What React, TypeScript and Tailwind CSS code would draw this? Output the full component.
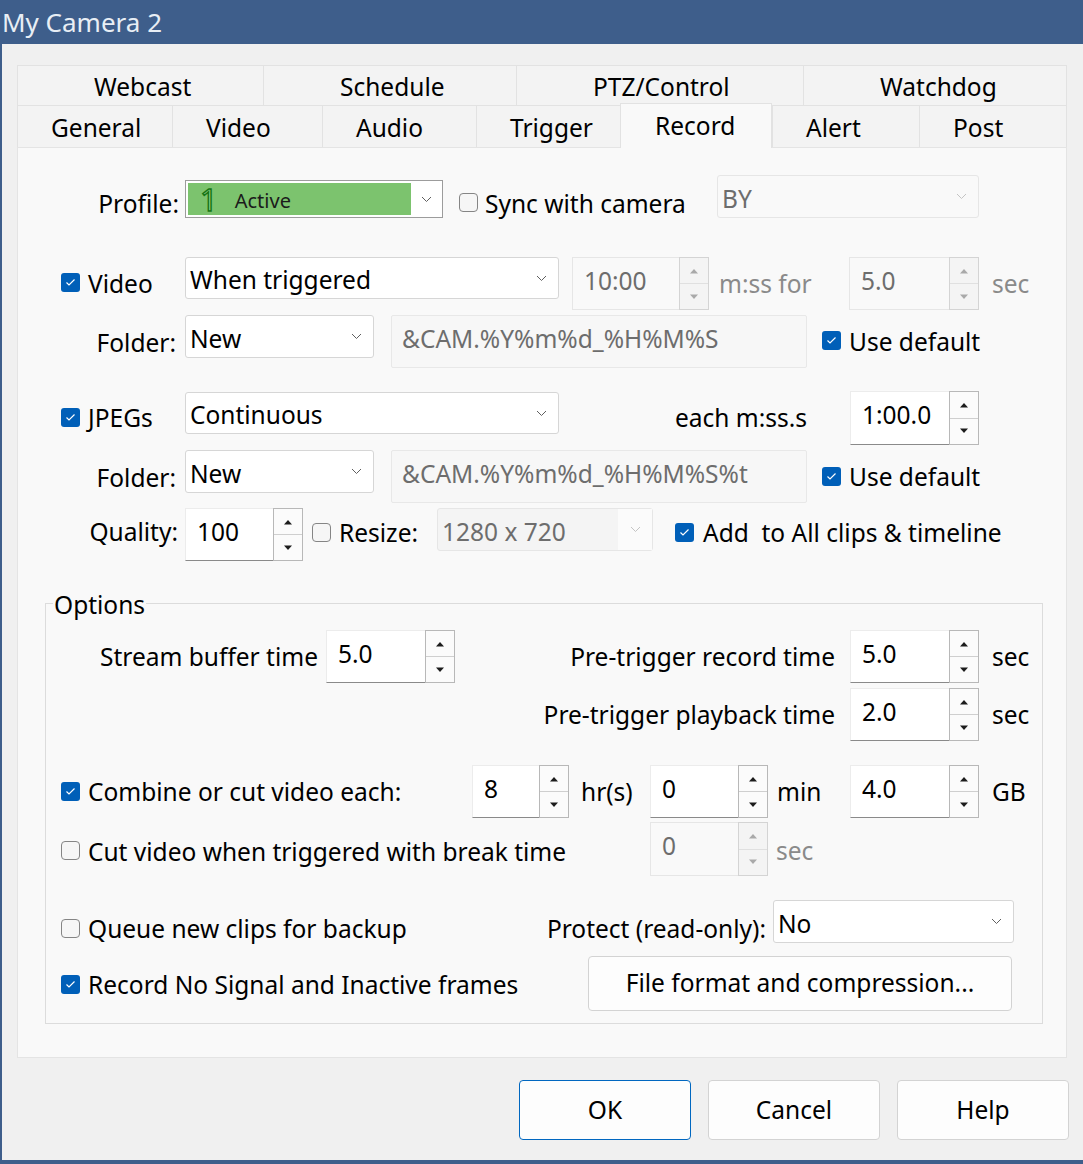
import React from "react";

// Win dialog: camera properties, Record tab
const topTabs = [
  { label: "Webcast", w: "w-[246px]" },
  { label: "Schedule", w: "w-[253px]" },
  { label: "PTZ/Control", w: "w-[287px]" },
  { label: "Watchdog", w: "w-[264px]" },
];

const bottomTabs = [
  { label: "General", w: "w-[155px]" },
  { label: "Video", w: "w-[150px]" },
  { label: "Audio", w: "w-[154px]" },
  { label: "Trigger", w: "w-[144px]" },
  { label: "Record", w: "w-[152px]", active: true },
  { label: "Alert", w: "w-[147px]" },
  { label: "Post", w: "w-[148px]" },
];

const T = ({ children, className = "" }: { children: React.ReactNode; className?: string }) => (
  <div className={`h-[30px] leading-[30px] whitespace-pre shrink-0 ${className}`}>{children}</div>
);

const Check = ({ checked, className = "" }: { checked?: boolean; className?: string }) =>
  checked ? (
    <div className={`w-[19px] h-[19px] shrink-0 rounded-[3px] bg-[#005fb8] flex items-center justify-center ${className}`}>
      <svg width="11" height="9" viewBox="0 0 11 9">
        <polyline points="1.5,4.5 4,7 9.5,1.5" fill="none" stroke="#fff" strokeWidth="1.2" />
      </svg>
    </div>
  ) : (
    <div className={`w-[19px] h-[19px] shrink-0 rounded-[4px] bg-[#f6f6f6] border border-[#858585] ${className}`} />
  );

const Chevron = ({ color = "#5f5f5f" }: { color?: string }) => (
  <svg width="11" height="7" viewBox="0 0 11 7">
    <polyline points="1,1 5.5,5.5 10,1" fill="none" stroke={color} strokeWidth="1" />
  </svg>
);

const Combo = ({
  value,
  className = "",
  disabled,
  splitBg,
}: {
  value: string;
  className?: string;
  disabled?: boolean;
  splitBg?: boolean;
}) => (
  <div
    className={`shrink-0 flex items-center rounded-[3px] border ${
      disabled
        ? `${splitBg ? "bg-[#f4f4f4]" : "bg-[#f9f9f9]"} border-[#e6e6e6] text-[#6d6d6d]`
        : "bg-white border-[#d6d6d6] text-black"
    } ${className}`}
  >
    <div className="flex-1 pl-[4px] pt-[4px] leading-[30px] whitespace-nowrap">{value}</div>
    <div className={`h-full w-[34px] flex items-center justify-center ${splitBg ? "bg-[#fbfbfb]" : ""}`}>
      <Chevron color={disabled ? "#c4c4c4" : "#5f5f5f"} />
    </div>
  </div>
);

const Arrow = ({ up, color }: { up?: boolean; color: string }) => (
  <svg width="10" height="6" viewBox="0 0 10 6">
    <polygon points={up ? "1,5.5 5,1 9,5.5" : "1,0.5 5,5 9,0.5"} fill={color} />
  </svg>
);

const Spin = ({ value, className = "", disabled }: { value: string; className?: string; disabled?: boolean }) => (
  <div className={`shrink-0 flex ${className}`}>
    <div
      className={`flex-1 pl-[11px] pt-[8px] leading-[30px] ${
        disabled
          ? "bg-[#f9f9f9] border border-r-0 border-[#e6e6e6] text-[#6d6d6d]"
          : "bg-white border-t border-l border-[#ececec] border-b-[#8a8a8a] border-b text-black"
      }`}
    >
      {value}
    </div>
    <div className={`w-[30px] flex flex-col border ${disabled ? "border-[#d4d4d4] bg-[#f4f4f4]" : "border-[#b8b8b8] bg-[#fbfbfb]"}`}>
      <div className={`flex-1 flex items-center justify-center border-b ${disabled ? "border-[#e0e0e0]" : "border-[#cfcfcf]"}`}>
        <Arrow up color={disabled ? "#a9a9a9" : "#1c1c1c"} />
      </div>
      <div className="flex-1 flex items-center justify-center">
        <Arrow color={disabled ? "#a9a9a9" : "#1c1c1c"} />
      </div>
    </div>
  </div>
);

const Field = ({ value, className = "" }: { value: string; className?: string }) => (
  <div className={`shrink-0 bg-[#f7f7f7] border border-[#e8e8e8] rounded-[2px] text-[#6d6d6d] pl-[10px] pt-[8px] leading-[30px] whitespace-nowrap ${className}`}>
    {value}
  </div>
);

const Btn = ({ label, className = "", focus }: { label: string; className?: string; focus?: boolean }) => (
  <div
    className={`shrink-0 flex items-center justify-center rounded-[4px] bg-[#fdfdfd] border ${
      focus ? "border-[#0067c0]" : "border-[#d3d3d3]"
    } ${className}`}
  >
    {label}
  </div>
);

export default function App() {
  return (
    <div className="w-[1083px] h-[1164px] bg-[#3e5e8b] flex flex-col font-['Noto_Sans',sans-serif] text-[24.5px] text-black overflow-hidden">
      {/* title bar */}
      <div className="h-[44px] shrink-0 flex items-center pl-[2px] text-[#e8eef5] text-[26px]">My Camera 2</div>

      {/* dialog body */}
      <div className="ml-[2px] mb-[4px] flex-1 bg-[#f0f0f0] pt-[21px] pl-[15px] flex flex-col">
        {/* tabs */}
        <div className="flex h-[40px]">
          {topTabs.map((t) => (
            <div key={t.label} className={`${t.w} h-full flex items-center pl-[76px] pt-[3px] bg-[#f3f3f3] border-t border-l border-[#e2e2e2] last:border-r`}>
              {t.label}
            </div>
          ))}
        </div>
        <div className="flex h-[42px] items-end">
          {bottomTabs.map((t) =>
            t.active ? (
              <div
                key={t.label}
                className={`${t.w} h-[45px] -mb-px relative z-10 flex items-center pl-[34px] pt-[1px] bg-[#f9f9f9] border-t border-l border-r border-[#e2e2e2]`}
              >
                {t.label}
              </div>
            ) : (
              <div key={t.label} className={`${t.w} h-full flex items-center pl-[33px] pt-[3px] bg-[#f3f3f3] border-t border-l border-[#e2e2e2] last:border-r`}>
                {t.label}
              </div>
            )
          )}
        </div>

        {/* tab panel */}
        <div className="w-[1050px] h-[911px] bg-[#f9f9f9] border border-[#e4e4e4] flex flex-col">
          {/* profile */}
          <div className="flex mt-[27px] h-[45px]">
            <T className="w-[161px] text-right mt-[14px]">Profile:</T>
            <div className="ml-[6px] mt-[5px] w-[258px] h-[38px] shrink-0 bg-white border border-[#9c9c9c] flex items-center">
              <div className="ml-[2px] w-[223px] h-[32px] bg-[#7cc36e] flex items-center">
                <span className="ml-[12px] text-[31px] leading-none text-[#9ad78a] [-webkit-text-stroke:1.5px_#157515]">1</span>
                <span className="ml-[17px] text-[20px] leading-none pt-[4px] text-[#1b1b1b]">Active</span>
              </div>
              <div className="flex-1 flex items-center justify-center">
                <Chevron />
              </div>
            </div>
            <Check className="ml-[16px] mt-[18px]" />
            <T className="ml-[7px] mt-[14px] w-[232px]">Sync with camera</T>
            <Combo value="BY" disabled className="w-[262px] h-[43px]" />
          </div>

          {/* video */}
          <div className="flex mt-[37px] h-[53px]">
            <Check checked className="ml-[43px] mt-[16px]" />
            <T className="ml-[8px] mt-[12px] w-[97px]">Video</T>
            <Combo value="When triggered" className="w-[374px] h-[42px]" />
            <Spin value="10:00" disabled className="ml-[13px] w-[137px] h-[53px]" />
            <T className="ml-[10px] mt-[12px] w-[130px] text-[#8a8a8a]">m:ss for</T>
            <Spin value="5.0" disabled className="w-[130px] h-[53px]" />
            <T className="ml-[13px] mt-[12px] text-[#8a8a8a]">sec</T>
          </div>

          <div className="flex mt-[5px] h-[53px]">
            <T className="w-[158px] text-right mt-[13px]">Folder:</T>
            <Combo value="New" className="ml-[9px] w-[189px] h-[43px]" />
            <Field value="&CAM.%Y%m%d_%H%M%S" className="ml-[17px] w-[416px] h-[53px]" />
            <Check checked className="ml-[15px] mt-[16px]" />
            <T className="ml-[8px] mt-[12px]">Use default</T>
          </div>

          {/* jpegs */}
          <div className="flex mt-[23px] h-[54px]">
            <Check checked className="ml-[43px] mt-[17px]" />
            <T className="ml-[8px] mt-[12px] w-[97px]">JPEGs</T>
            <Combo value="Continuous" className="mt-[1px] w-[374px] h-[42px]" />
            <T className="mt-[12px] w-[248px] text-right">each m:ss.s</T>
            <Spin value="1:00.0" className="ml-[43px] w-[129px] h-[54px]" />
          </div>

          <div className="flex mt-[5px] h-[53px]">
            <T className="w-[158px] text-right mt-[13px]">Folder:</T>
            <Combo value="New" className="ml-[9px] w-[189px] h-[43px]" />
            <Field value="&CAM.%Y%m%d_%H%M%S%t" className="ml-[17px] w-[416px] h-[53px]" />
            <Check checked className="ml-[15px] mt-[17px]" />
            <T className="ml-[8px] mt-[12px]">Use default</T>
          </div>

          <div className="flex mt-[5px] h-[53px]">
            <T className="w-[160px] text-right mt-[9px]">Quality:</T>
            <Spin value="100" className="ml-[7px] w-[118px] h-[53px]" />
            <Check className="ml-[9px] mt-[15px]" />
            <T className="ml-[8px] mt-[10px] w-[98px]">Resize:</T>
            <Combo value="1280 x 720" disabled splitBg className="w-[216px] h-[43px]" />
            <Check checked className="ml-[22px] mt-[15px]" />
            <T className="ml-[9px] mt-[10px]">{"Add  to All clips & timeline"}</T>
          </div>

          {/* options group */}
          <div className="relative ml-[27px] mt-[42px] w-[998px] h-[421px] border border-[#dcdcdc] flex flex-col">
            <div className="absolute left-[7px] top-[-14px] px-[1px] bg-[#f9f9f9] leading-[30px]">Options</div>

            <div className="flex mt-[26px] h-[53px]">
              <T className="w-[272px] text-right mt-[12px]">Stream buffer time</T>
              <Spin value="5.0" className="ml-[8px] w-[129px] h-[53px]" />
              <T className="w-[380px] text-right mt-[12px]">Pre-trigger record time</T>
              <Spin value="5.0" className="ml-[15px] w-[129px] h-[53px]" />
              <T className="ml-[13px] mt-[12px]">sec</T>
            </div>

            <div className="flex mt-[5px] h-[53px]">
              <T className="w-[789px] text-right mt-[12px]">Pre-trigger playback time</T>
              <Spin value="2.0" className="ml-[15px] w-[129px] h-[53px]" />
              <T className="ml-[13px] mt-[12px]">sec</T>
            </div>

            <div className="flex mt-[24px] h-[53px]">
              <Check checked className="ml-[15px] mt-[17px]" />
              <T className="ml-[8px] mt-[12px] w-[384px]">Combine or cut video each:</T>
              <Spin value="8" className="w-[97px] h-[53px]" />
              <T className="ml-[12px] mt-[12px] w-[69px]">hr(s)</T>
              <Spin value="0" className="w-[118px] h-[53px]" />
              <T className="ml-[9px] mt-[12px] w-[73px]">min</T>
              <Spin value="4.0" className="w-[129px] h-[53px]" />
              <T className="ml-[13px] mt-[12px]">GB</T>
            </div>

            <div className="flex mt-[4px] h-[54px]">
              <Check className="ml-[15px] mt-[19px]" />
              <T className="ml-[8px] mt-[15px] w-[562px]">Cut video when triggered with break time</T>
              <Spin value="0" disabled className="w-[118px] h-[54px]" />
              <T className="ml-[8px] mt-[14px] text-[#8a8a8a]">sec</T>
            </div>

            <div className="flex mt-[24px] h-[43px]">
              <Check className="ml-[15px] mt-[19px]" />
              <T className="ml-[8px] mt-[14px] w-[453px]">Queue new clips for backup</T>
              <T className="w-[225px] text-right mt-[14px]">Protect (read-only):</T>
              <Combo value="No" className="ml-[7px] w-[241px] h-[43px]" />
            </div>

            <div className="flex mt-[13px] h-[55px]">
              <Check checked className="ml-[15px] mt-[19px]" />
              <T className="ml-[8px] mt-[14px] w-[500px]">Record No Signal and Inactive frames</T>
              <Btn label="File format and compression..." className="w-[424px] h-[55px]" />
            </div>
          </div>
        </div>

        {/* dialog buttons */}
        <div className="flex justify-end gap-[17px] pr-[14px] mt-[22px]">
          <Btn label="OK" focus className="w-[172px] h-[60px]" />
          <Btn label="Cancel" className="w-[172px] h-[60px]" />
          <Btn label="Help" className="w-[172px] h-[60px]" />
        </div>
      </div>
    </div>
  );
}
